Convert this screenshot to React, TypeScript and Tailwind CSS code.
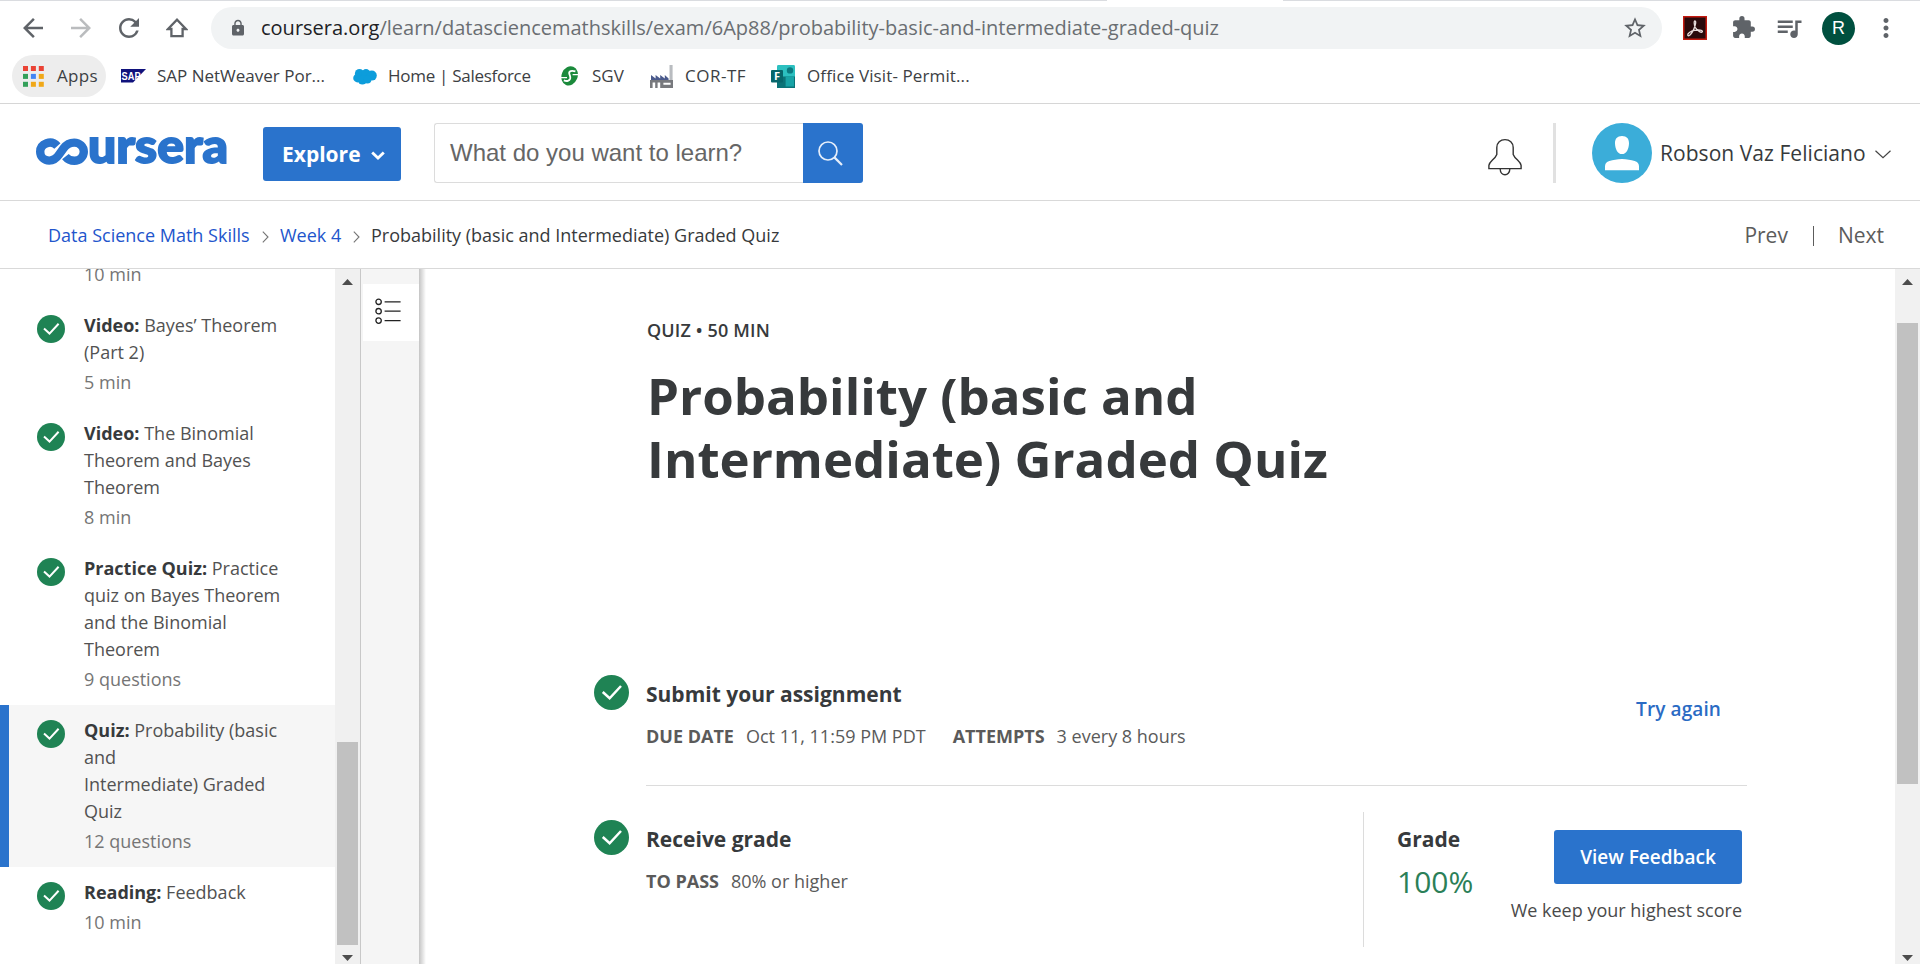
import React from "react";
import {
  MdArrowBack,
  MdArrowForward,
  MdExtension,
  MdLock,
  MdMoreVert,
  MdQueueMusic,
  MdRefresh,
  MdStarBorder,
} from "react-icons/md";

function Check({ className }: { className: string }) {
  return (
    <svg viewBox="0 0 28 28" className={className} fill="none" aria-hidden="true">
      <circle cx="14" cy="14" r="14" fill="#1f8354" />
      <path d="M7 13.6 L12.5 18.6 L21.6 8.8" stroke="#fff" strokeWidth="2" />
    </svg>
  );
}

function HomeIcon() {
  return (
    <svg viewBox="0 0 22 22" className="size-[22px]" fill="none" stroke="#5f6368" strokeWidth="2.3">
      <path d="M2 12 L11 2.6 L20 12 H16.6 V19.2 H5.4 V12 Z" />
    </svg>
  );
}

function AcrobatIcon() {
  return (
    <svg viewBox="0 0 24 24" className="size-6" fill="none">
      <rect x="0.75" y="0.75" width="22.5" height="22.5" fill="#2a0a0c" stroke="#c41a10" strokeWidth="1.5" />
      <path
        d="M4.8 19.4 C4 17.4 7.6 15.2 11.5 14.4 C15.5 13.6 19.6 14 19.4 15.6 C19 17.4 14.6 15.2 12.4 11.6 C11 9 10.8 4.6 12 4.8 C13.4 5 12.6 9.4 10.6 13.6 C8.8 17.4 6 20.8 4.8 19.4 Z"
        stroke="#e9dcdc"
        strokeWidth="1.3"
      />
    </svg>
  );
}

const appColors = [
  "#ea4335", "#ea4335", "#ea4335",
  "#34a05a", "#4285f4", "#f0a818",
  "#34a05a", "#f0a818", "#f0a818",
];

function AppsIcon() {
  return (
    <svg viewBox="0 0 21 21" className="size-[21px]">
      {appColors.map((c, i) => (
        <rect key={i} x={(i % 3) * 7.9} y={Math.floor(i / 3) * 7.9} width="5" height="5" fill={c} />
      ))}
    </svg>
  );
}

function SapIcon() {
  return (
    <svg viewBox="0 0 25 14" className="h-[14px] w-[25px] overflow-visible">
      <path d="M0 0 H25 L12 13.5 H0 Z" fill="#10127c" />
      <text x="0.6" y="11" fontFamily="Liberation Sans" fontWeight="700" fontSize="11.5" textLength="19" fill="#fff" lengthAdjust="spacingAndGlyphs">
        SAP
      </text>
    </svg>
  );
}

function CloudIcon() {
  return (
    <svg viewBox="0 0 24 17" className="h-[17px] w-6" fill="#0d9ddb">
      <circle cx="6.5" cy="5.5" r="4.6" />
      <circle cx="13" cy="5.2" r="4.2" />
      <circle cx="18.8" cy="7.6" r="5" />
      <circle cx="4.6" cy="10" r="4.4" />
      <circle cx="9.4" cy="12" r="4.6" />
      <circle cx="14.4" cy="11.5" r="4" />
    </svg>
  );
}

function SgvIcon() {
  return (
    <svg viewBox="0 0 20 20" className="size-5" fill="none">
      <ellipse cx="9.6" cy="10" rx="8" ry="9.8" transform="rotate(22 10 10)" fill="#1b8a3c" />
      <path d="M15.4 5.4 C11.6 4.2 8.8 5 9.2 7.4 C9.6 9.6 10.8 10.6 10.2 12.6 C9.4 15 7 15.6 3.8 14.4" stroke="#fff" strokeWidth="1.8" />
      <path d="M12.6 8.6 H20 M0 11.6 H7" stroke="#fff" strokeWidth="1.2" />
    </svg>
  );
}

function FactoryIcon() {
  return (
    <svg viewBox="0 0 24 23" className="h-[23px] w-6">
      <path d="M19.5 0 H22.6 V15 H19.5 Z" fill="#b9bcc0" />
      <path d="M1 15 V10 L5.6 13.4 V10 L10.2 13.4 V10 L14.8 13.4 V10 L18.6 13.4 V15 Z" fill="#4a5a8c" />
      <path d="M0 15 H23 V23 H0 Z" fill="#77797d" />
      <path d="M2.6 17.6 H5.2 V23 H2.6 Z M7.6 17.6 H10.2 V23 H7.6 Z M13.4 17.8 H20.6 V19.8 H13.4 Z" fill="#fff" />
    </svg>
  );
}

function FormsIcon() {
  return (
    <svg viewBox="0 0 24 23" className="h-[23px] w-6">
      <rect x="6" y="0" width="18" height="23" rx="1.4" fill="#2cc0c0" />
      <rect x="6" y="11.5" width="18" height="11.5" fill="#0b7377" />
      <rect x="14.6" y="11.5" width="8.4" height="10" fill="#18a3a6" />
      <circle cx="19" cy="5.4" r="3.2" fill="#0b7a80" />
      <rect x="0" y="5" width="12" height="12.5" rx="1" fill="#07666b" />
      <text x="3" y="15.2" fontFamily="Open Sans" fontWeight="700" fontSize="11" fill="#fff">F</text>
    </svg>
  );
}

function CourseraLogo() {
  return (
    <svg viewBox="0 0 192 36" className="h-9 w-48 shrink-0 overflow-visible" fill="none">
      <path
        d="M21.4 11 C18.4 7.8 14.4 6.8 10.6 8.2 C6.6 9.6 4.2 12.8 4.2 16.8 C4.2 21.8 8.2 25.6 13.2 25.6 C18 25.6 20.6 23.2 23.2 19.4 L27.6 13.2 C30.4 9.4 34 7.6 38.2 7.6 C43.6 7.6 47.8 11.6 47.8 16.8 C47.8 21.8 43.6 25.8 38.4 25.8 C34.6 25.8 31.6 24.4 29.4 21.6"
        stroke="#2a73cc"
        strokeWidth="8.4"
      />
      <text
        x="52"
        y="28.4"
        fontFamily="Lato"
        fontWeight="900"
        fontSize="47"
        textLength="140"
        lengthAdjust="spacingAndGlyphs"
        fill="#2a73cc"
        stroke="#2a73cc"
        strokeWidth="1.8"
      >
        ursera
      </text>
    </svg>
  );
}

function Chevron({ className = "" }: { className?: string }) {
  return (
    <svg viewBox="0 0 7 12" className={`h-3 w-[7px] ${className}`} fill="none" stroke="#757575" strokeWidth="1.1">
      <path d="M0.8 0.6 L6 6 L0.8 11.4" />
    </svg>
  );
}

function ArrowUp() {
  return (
    <svg viewBox="0 0 11 6" className="h-1.5 w-[11px]" fill="#4d4d4d">
      <path d="M0 6 L5.5 0 L11 6 Z" />
    </svg>
  );
}

function ArrowDown() {
  return (
    <svg viewBox="0 0 11 6" className="h-1.5 w-[11px]" fill="#4d4d4d">
      <path d="M0 0 L5.5 6 L11 0 Z" />
    </svg>
  );
}

type Item = { kind: string; lines: string[]; meta: string; active?: boolean };

const items: Item[] = [
  { kind: "Video:", lines: ["Bayes’ Theorem", "(Part 2)"], meta: "5 min" },
  { kind: "Video:", lines: ["The Binomial", "Theorem and Bayes", "Theorem"], meta: "8 min" },
  { kind: "Practice Quiz:", lines: ["Practice", "quiz on Bayes Theorem", "and the Binomial", "Theorem"], meta: "9 questions" },
  { kind: "Quiz:", lines: ["Probability (basic", "and", "Intermediate) Graded", "Quiz"], meta: "12 questions", active: true },
  { kind: "Reading:", lines: ["Feedback"], meta: "10 min" },
];

function LessonItem({ item }: { item: Item }) {
  return (
    <li className={`flex border-l-[9px] py-3 pl-7 ${item.active ? "border-[#2a73cc] bg-[#f6f6f6]" : "border-transparent"}`}>
      <Check className="mt-[3px] size-7 shrink-0" />
      <div className="ml-[19px] whitespace-nowrap">
        <p className="text-[#525252]">
          <b className="font-bold text-[#373a3c]">{item.kind}</b>{" "}
          {item.lines.map((line, i) => (
            <React.Fragment key={i}>
              {i > 0 && <br />}
              {line}
            </React.Fragment>
          ))}
        </p>
        <p className="mt-[3px] text-[#757575]">{item.meta}</p>
      </div>
    </li>
  );
}

function BrowserBar() {
  return (
    <div className="flex h-[104px] shrink-0 flex-col border-b border-[#d6d6d6]">
      <div className="flex h-px">
        <div className="w-[1107px] bg-[#dadce0]" />
        <div className="w-[176px]" />
        <div className="flex-1 bg-[#dadce0]" />
      </div>
      <div className="mt-1.5 flex h-[42px] items-center text-[#5f6368]">
        <MdArrowBack className="ml-[18px] size-[30px]" />
        <MdArrowForward className="ml-[18px] size-[30px] text-[#babcbe]" />
        <MdRefresh className="ml-[18px] size-[30px]" />
        <div className="ml-[22px]">
          <HomeIcon />
        </div>
        <div className="ml-[23px] flex h-[42px] w-[1451px] items-center rounded-full bg-[#f1f3f4]">
          <MdLock className="ml-[18px] size-[18px]" />
          <span className="ml-[14px] text-[20px] leading-[30px] whitespace-nowrap text-[#6a6e72]">
            <span className="text-[#202124]">coursera.org</span>
            /learn/datasciencemathskills/exam/6Ap88/probability-basic-and-intermediate-graded-quiz
          </span>
          <MdStarBorder className="mr-[14px] ml-auto size-[26px]" />
        </div>
        <div className="ml-[21px]">
          <AcrobatIcon />
        </div>
        <MdExtension className="mb-px ml-6 size-[25px]" />
        <MdQueueMusic className="ml-[18px] size-[30px]" />
        <div className="ml-[18px] flex size-[33px] items-center justify-center rounded-full bg-[#00503f] font-['Liberation_Sans',sans-serif] text-[18px] text-white">
          R
        </div>
        <MdMoreVert className="ml-4 size-[30px]" />
      </div>
      <div className="mt-1.5 ml-3 flex h-[42px] items-center text-[17px] leading-[26px] whitespace-nowrap text-[#3c4043]">
        <div className="flex h-[42px] w-[94px] items-center rounded-full bg-[#ededed] pl-[11px]">
          <AppsIcon />
          <span className="ml-[13px] tracking-[0.3px]">Apps</span>
        </div>
        <div className="ml-[15px] flex w-[232px] items-center">
          <SapIcon />
          <span className="ml-[11px]">SAP NetWeaver Por...</span>
        </div>
        <div className="flex w-[207px] items-center">
          <CloudIcon />
          <span className="ml-[11px] tracking-[-0.28px]">Home | Salesforce</span>
        </div>
        <div className="flex w-[90px] items-center">
          <SgvIcon />
          <span className="ml-3">SGV</span>
        </div>
        <div className="flex w-[121px] items-center">
          <FactoryIcon />
          <span className="ml-[11px] tracking-[0.5px]">COR-TF</span>
        </div>
        <div className="flex items-center">
          <FormsIcon />
          <span className="ml-3 tracking-[0.12px]">Office Visit- Permit...</span>
        </div>
      </div>
    </div>
  );
}

function Header() {
  return (
    <header className="flex h-[97px] shrink-0 items-start border-b border-[#d9d9d9] pl-9">
      <div className="mt-[31px]">
        <CourseraLogo />
      </div>
      <button className="mt-[23px] ml-[35px] flex h-[54px] w-[138px] items-center rounded-[3px] bg-[#2a73cc] pt-0.5 pl-[19px] text-[21px] font-bold text-white">
        Explore
        <svg viewBox="0 0 14 9" className="ml-2.5 h-[9px] w-3.5" fill="none" stroke="#fff" strokeWidth="2.8">
          <path d="M1.2 1.4 L7 7 L12.8 1.4" />
        </svg>
      </button>
      <div className="mt-[19px] ml-[33px] flex h-[60px] w-[429px]">
        <div className="flex flex-1 items-center rounded-l-[3px] border border-r-0 border-[#dcdcdc] pl-[15px] font-['Liberation_Sans',sans-serif] text-[24px] text-[#666]">
          What do you want to learn?
        </div>
        <button className="flex w-[60px] items-center rounded-r-[3px] bg-[#2a73cc] pl-[15px]">
          <svg viewBox="0 0 25 25" className="size-[25px]" fill="none" stroke="#e6eefa" strokeWidth="1.7">
            <circle cx="10" cy="10" r="9" />
            <path d="M16.4 16.4 L24 24" strokeWidth="2.2" />
          </svg>
        </button>
      </div>
      <svg viewBox="0 0 34 38" className="mt-[34px] ml-[625px] h-[38px] w-[34px]" fill="none" stroke="#333" strokeWidth="1.4">
        <path d="M0.9 30.6 H33.1 V27.4 C32.6 23.4 27.2 21.4 25.2 16.4 V9.6 C25.2 4.6 21.6 1.6 17 1.6 C12.4 1.6 8.8 4.6 8.8 9.6 V16.4 C6.8 21.4 1.4 23.4 0.9 27.4 Z" />
        <path d="M12.2 31 C12.2 38.6 21.8 38.6 21.8 31" />
      </svg>
      <div className="mt-[19px] ml-[31px] h-[60px] w-[3px] bg-[#e1e1e1]" />
      <svg viewBox="0 0 60 60" className="mt-[19px] ml-9 size-[60px]">
        <circle cx="30" cy="30" r="30" fill="#3badd9" />
        <path d="M30 13 C34.8 13 37.2 16 37 20.4 C36.8 26 34.4 31 30 31 C25.6 31 23.2 26 23 20.4 C22.8 16 25.2 13 30 13 Z" fill="#fff" />
        <path d="M13 47.2 V43 C13.4 40 14.6 38.8 17.4 38 C21 37 25 36 30 36 C35 36 39 37 42.6 38 C45.4 38.8 46.6 40 47 43 V47.2 Z" fill="#fff" />
      </svg>
      <div className="mt-[19px] ml-2 flex h-[60px] items-center pt-0.5">
        <span className="text-[21px] tracking-[0.05px] whitespace-nowrap text-[#373a3c]">Robson Vaz Feliciano</span>
        <svg viewBox="0 0 16 9" className="ml-[9px] h-[9px] w-4" fill="none" stroke="#444" strokeWidth="1.2">
          <path d="M0.5 0.8 L8 7.8 L15.5 0.8" />
        </svg>
      </div>
    </header>
  );
}

function Breadcrumbs() {
  return (
    <nav className="flex h-[68px] shrink-0 items-center border-b border-[#d9d9d9] pt-0.5 pl-12 whitespace-nowrap">
      <a className="w-[214px] text-[#2255cc]">Data Science Math Skills</a>
      <Chevron className="mt-0.5" />
      <a className="ml-[11px] w-[73px] text-[#2255cc]">Week 4</a>
      <Chevron className="mt-0.5" />
      <span className="ml-[11px] text-[#373a3c]">Probability (basic and Intermediate) Graded Quiz</span>
      <div className="mr-9 ml-auto flex items-center text-[21px] text-[#5c5c5c]">
        <span>Prev</span>
        <span className="ml-[25px] h-5 w-px bg-[#5c5c5c]" />
        <span className="ml-6">Next</span>
      </div>
    </nav>
  );
}

function Sidebar() {
  return (
    <aside className="flex shrink-0">
      <ul className="-mt-[9px] w-[335px] text-[18px] leading-[27px]">
        <li className="h-10 pt-px pl-[84px] text-[#757575]">10 min</li>
        {items.map((item, i) => (
          <LessonItem key={i} item={item} />
        ))}
      </ul>
      <div className="flex w-[26px] flex-col items-center border-r border-[#c8c8c8] bg-[#f0f0f0] pt-2.5 pb-[3px]">
        <ArrowUp />
        <div className="mt-auto mb-2.5 h-[203px] w-[21px] bg-[#c1c1c1]" />
        <ArrowDown />
      </div>
      <div className="flex w-[58px] flex-col bg-[#f5f5f5] pt-[15px] pl-0.5">
        <div className="flex h-[57px] w-[56px] items-center bg-white pl-3">
          <svg viewBox="0 0 26 26" className="mb-1 h-[26px] w-[26px]" fill="none" stroke="#222" strokeWidth="1.3">
            <circle cx="3.6" cy="3.8" r="2.7" />
            <circle cx="3.6" cy="13.2" r="2.7" />
            <circle cx="3.6" cy="22.6" r="2.7" />
            <path d="M9.6 3.8 H25.6 M9.6 13.2 H25.6 M9.6 22.6 H25.6" />
          </svg>
        </div>
      </div>
      <div className="w-[7px] bg-linear-to-r from-[#c4c4c4] to-white" />
    </aside>
  );
}

function QuizPage() {
  return (
    <main className="flex-1 pl-[168px]">
      <div className="ml-[53px]">
        <p className="pt-12 text-[18px] leading-[27px] font-semibold tracking-[0.15px] text-[#373a3c]">QUIZ • 50 MIN</p>
        <h1 className="mt-5 text-[51px] leading-[63px] font-bold text-[#373a3c]">
          Probability (basic and
          <br />
          Intermediate) Graded Quiz
        </h1>
      </div>
      <section className="mt-[185px] flex items-start">
        <Check className="size-[35px] shrink-0" />
        <div className="ml-[17px] flex h-[111px] w-[1101px] items-start justify-between border-b border-[#dcdcdc] pt-1">
          <div>
            <h2 className="text-[21px] leading-[30px] font-bold text-[#373a3c]">Submit your assignment</h2>
            <p className="mt-3.5 flex leading-[27px] text-[#5a5a5a]">
              <b className="font-bold">DUE DATE</b>
              <span className="ml-3">Oct 11, 11:59 PM PDT</span>
              <b className="ml-[27px] font-bold">ATTEMPTS</b>
              <span className="ml-3">3 every 8 hours</span>
            </p>
          </div>
          <a className="mt-[17px] mr-[26px] text-[19px] leading-[27px] font-semibold tracking-[0.1px] text-[#2a6bc4]">Try again</a>
        </div>
      </section>
      <section className="flex items-start">
        <Check className="mt-[34px] size-[35px] shrink-0" />
        <div className="ml-[17px] w-[717px] pt-[38px]">
          <h2 className="text-[21px] leading-[30px] font-bold text-[#373a3c]">Receive grade</h2>
          <p className="mt-3.5 flex leading-[27px] text-[#5a5a5a]">
            <b className="font-bold">TO PASS</b>
            <span className="ml-3">80% or higher</span>
          </p>
        </div>
        <div className="mt-[26px] flex h-[135px] w-[379px] items-start border-l border-[#dcdcdc] pl-[33px]">
          <div className="mt-3 shrink-0">
            <h2 className="text-[21px] leading-[30px] font-bold text-[#373a3c]">Grade</h2>
            <p className="mt-2 text-[30px] leading-10 text-[#2b7f58]">100%</p>
          </div>
          <div className="mt-[18px] flex flex-1 flex-col items-end">
            <button className="h-[54px] w-[188px] rounded-[3px] bg-[#2a73cc] text-[19px] font-semibold text-white">View Feedback</button>
            <p className="mt-[13px] leading-[27px] text-[#4a4a4a]">We keep your highest score</p>
          </div>
        </div>
      </section>
    </main>
  );
}

export default function App() {
  return (
    <div className="flex h-[964px] w-[1920px] flex-col overflow-hidden bg-white font-['Open_Sans',sans-serif] text-[18px]">
      <BrowserBar />
      <Header />
      <Breadcrumbs />
      <div className="flex h-[695px] overflow-hidden">
        <Sidebar />
        <QuizPage />
        <div className="flex w-[25px] shrink-0 flex-col items-center bg-[#f1f1f1] pt-2.5 pb-[3px]">
          <ArrowUp />
          <div className="mt-[38px] h-[461px] w-[21px] bg-[#c1c1c1]" />
          <div className="mt-auto">
            <ArrowDown />
          </div>
        </div>
      </div>
    </div>
  );
}
